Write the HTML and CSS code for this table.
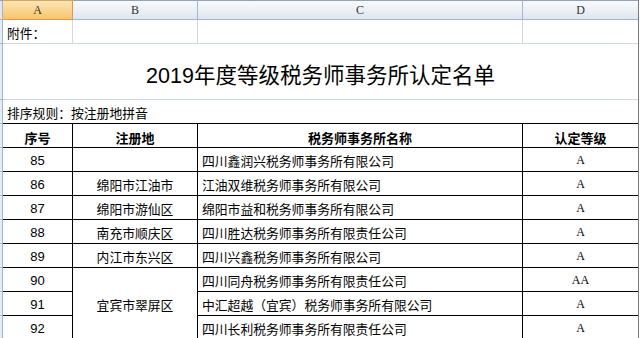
FILE: index.html
```html
<!DOCTYPE html>
<html lang="zh-CN">
<head>
<meta charset="utf-8">
<title>2019年度等级税务师事务所认定名单</title>
<link rel="stylesheet" href="styles.css">
</head>
<body>
<div class="sheet">
  <div class="rh corner"></div>
  <div class="ch sel ca">A</div>
  <div class="ch cb">B</div>
  <div class="ch cc">C</div>
  <div class="ch cd">D</div>

  <div class="rh"></div>
  <div class="cell grid ca left">附件：</div>
  <div class="cell grid cb"></div>
  <div class="cell grid cc"></div>
  <div class="cell grid cd"></div>

  <div class="rh tall"></div>
  <div class="cell title span4">2019年度等级税务师事务所认定名单</div>

  <div class="rh"></div>
  <div class="cell note span4 left">排序规则：按注册地拼音</div>

  <div class="rh"></div>
  <div class="cell tb th ca">序号</div>
  <div class="cell tb th cb">注册地</div>
  <div class="cell tb th cc">税务师事务所名称</div>
  <div class="cell tb th cd">认定等级</div>

  <div class="rh"></div>
  <div class="cell tb num ca">85</div>
  <div class="cell tb cb"></div>
  <div class="cell tb cc left">四川鑫润兴税务师事务所有限公司</div>
  <div class="cell tb grade cd">A</div>

  <div class="rh"></div>
  <div class="cell tb num ca">86</div>
  <div class="cell tb cb">绵阳市江油市</div>
  <div class="cell tb cc left">江油双维税务师事务所有限公司</div>
  <div class="cell tb grade cd">A</div>

  <div class="rh"></div>
  <div class="cell tb num ca">87</div>
  <div class="cell tb cb">绵阳市游仙区</div>
  <div class="cell tb cc left">绵阳市益和税务师事务所有限公司</div>
  <div class="cell tb grade cd">A</div>

  <div class="rh"></div>
  <div class="cell tb num ca">88</div>
  <div class="cell tb cb">南充市顺庆区</div>
  <div class="cell tb cc left">四川胜达税务师事务所有限责任公司</div>
  <div class="cell tb grade cd">A</div>

  <div class="rh"></div>
  <div class="cell tb num ca">89</div>
  <div class="cell tb cb">内江市东兴区</div>
  <div class="cell tb cc left">四川兴鑫税务师事务所有限公司</div>
  <div class="cell tb grade cd">A</div>

  <div class="rh"></div>
  <div class="cell tb num ca">90</div>
  <div class="cell tb cb span3">宜宾市翠屏区</div>
  <div class="cell tb cc left">四川同舟税务师事务所有限责任公司</div>
  <div class="cell tb grade cd">AA</div>

  <div class="rh"></div>
  <div class="cell tb num ca">91</div>
  <div class="cell tb cc left">中汇超越（宜宾）税务师事务所有限公司</div>
  <div class="cell tb grade cd">A</div>

  <div class="rh"></div>
  <div class="cell tb num ca">92</div>
  <div class="cell tb cc left">四川长利税务师事务所有限责任公司</div>
  <div class="cell tb grade cd">A</div>
</div>
</body>
</html>
```
FILE: styles.css
```css
html, body {
  margin: 0;
  padding: 0;
  background: #ffffff;
  overflow: hidden;
}
body {
  width: 640px;
  height: 338px;
}
.sheet {
  width: 639px;
  box-sizing: border-box;
  border-right: 1px solid #7a7a7a;
  display: grid;
  grid-template-columns: 3px 70px 125px 325px 115px;
  grid-template-rows: 20px 24px 56px 24px 24px repeat(8, 24px);
  font-family: "Liberation Sans", "Noto Sans CJK SC", sans-serif;
  font-size: 12.8px;
  color: #000;
}
.rh {
  grid-column: 1;
  box-sizing: border-box;
  background: #e4ecf7;
  border-right: 1px solid #9eb6ce;
  border-bottom: 1px solid #9eb6ce;
}
.rh.corner {
  border-top: 1px solid #8ea3bf;
  background: #e1e8f2;
}
.ca { grid-column: 2; }
.cb { grid-column: 3; }
.cc { grid-column: 4; }
.cd { grid-column: 5; }
.span4 { grid-column: 2 / span 4; }
.span3 { grid-row: span 3; }

.ch {
  box-sizing: border-box;
  border-top: 1px solid #8ea3bf;
  border-bottom: 1px solid #9eb6ce;
  border-right: 1px solid #9eb6ce;
  background: linear-gradient(#f9fbfd, #dfe6f0);
  display: flex;
  align-items: center;
  justify-content: center;
  font-family: "Liberation Serif", serif;
  font-size: 12px;
  color: #333;
}
.ch.cd { border-right: none; }
.ch.sel {
  background: linear-gradient(#fce6b8, #f7c56c);
  border-bottom-color: #f29436;
  border-right-color: #f29436;
  border-top-color: #d8a55a;
}

.cell {
  box-sizing: border-box;
  display: flex;
  align-items: center;
  justify-content: center;
  padding-top: 2px;
  white-space: nowrap;
  overflow: hidden;
}
.cell.left {
  justify-content: flex-start;
  padding-left: 4px;
}
.grid {
  border-right: 1px solid #d0d7e5;
  border-bottom: 1px solid #d0d7e5;
}
.grid.cd { border-right: none; }
.title {
  border-bottom: 1px solid #d0d7e5;
  font-size: 21.5px;
  padding-top: 3px;
}
.note {
  border-bottom: 1px solid #000;
}
.tb {
  border-right: 1px solid #000;
  border-bottom: 1px solid #000;
}
.tb.cd { border-right: none; }
.th {
  font-weight: 700;
  font-size: 13px;
  padding-top: 3px;
}
.num {
  font-size: 13px;
}
.grade {
  font-family: "Liberation Serif", serif;
  font-size: 12px;
}
```
